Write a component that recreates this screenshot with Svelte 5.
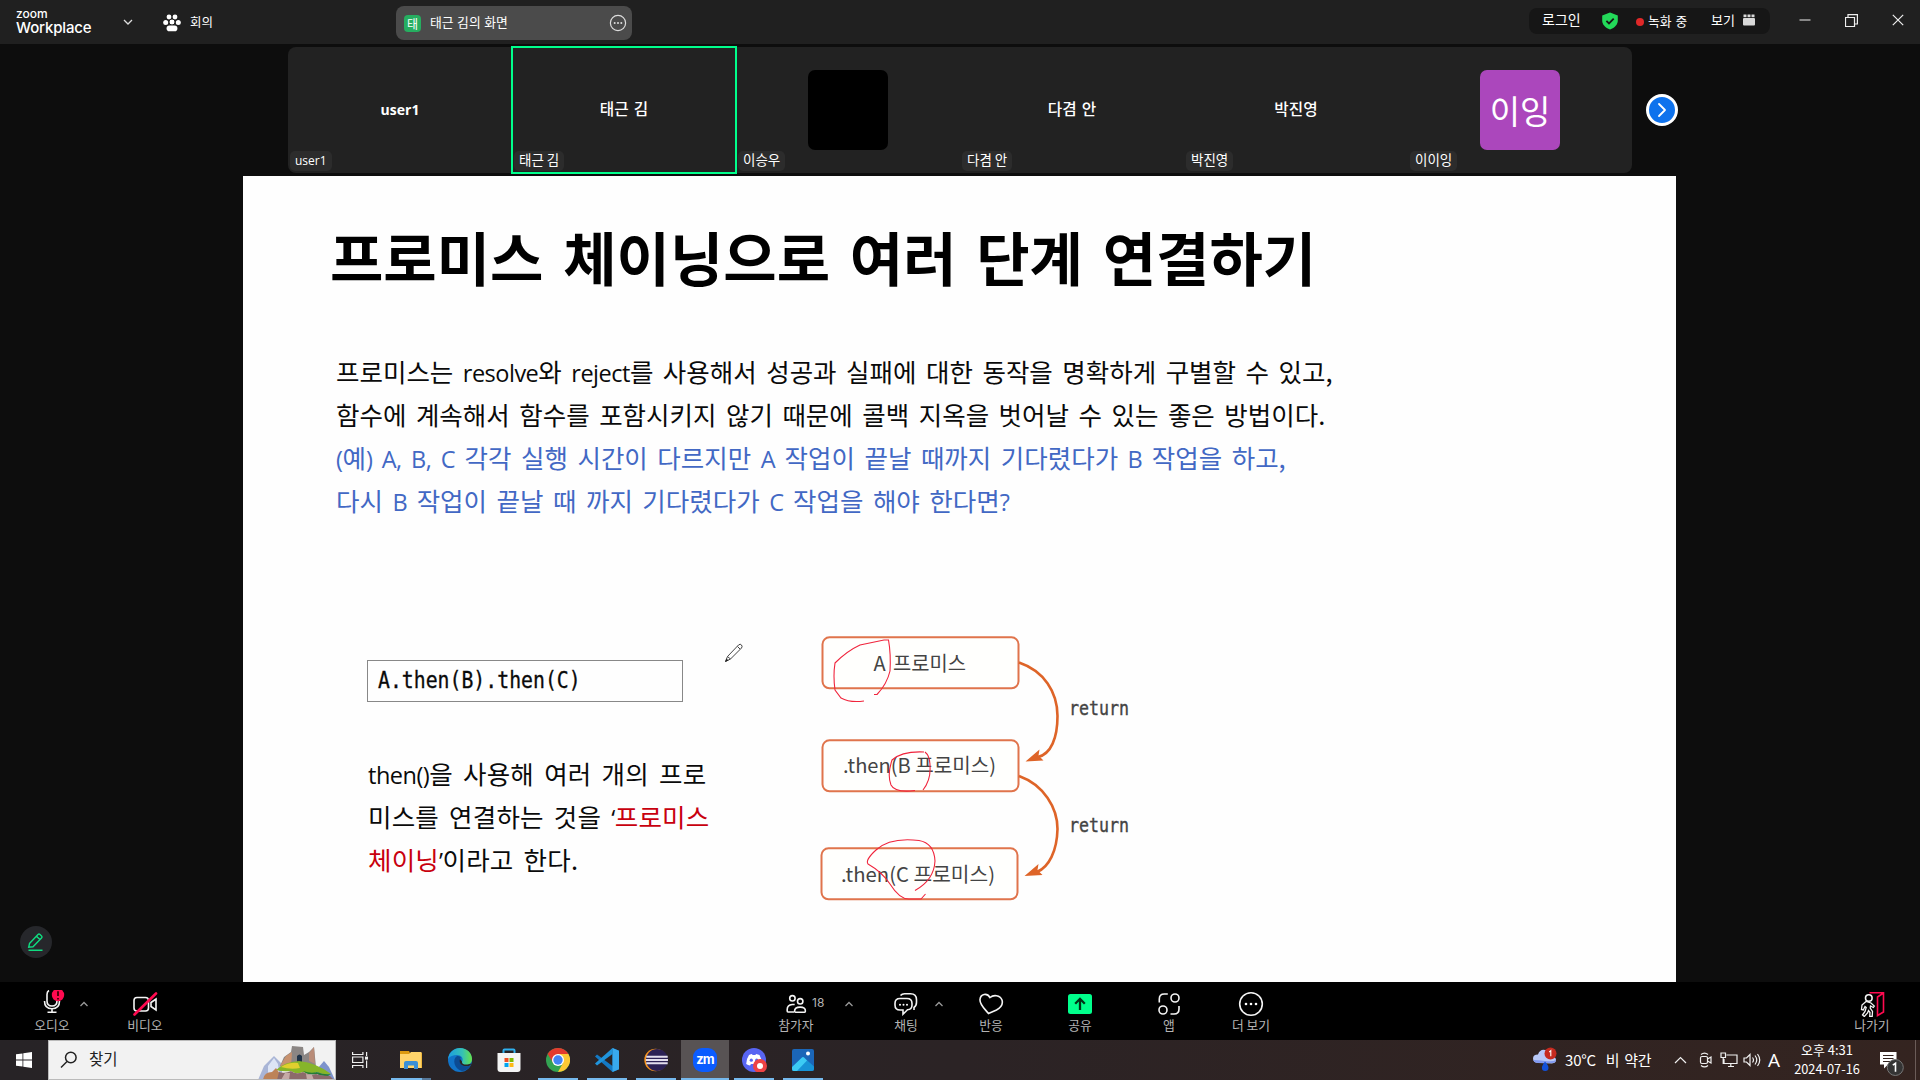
<script>
  const tiles = [
    { name: 'user1', label: 'user1', latin: true },
    { name: '태근 김', label: '태근 김', active: true },
    { label: '이승우', avatar: 'black', text: '' },
    { name: '다겸 안', label: '다겸 안' },
    { name: '박진영', label: '박진영' },
    { label: '이이잉', avatar: 'purple', text: '이잉' },
  ];
</script>

<div class="screen">
  <header class="topbar">
    <div class="brand"><span class="b1">zoom</span><span class="b2">Workplace</span></div>
    <svg class="brand-caret" width="10" height="6" viewBox="0 0 10 6"><path d="M1 1l4 4 4-4" /></svg>
    <svg class="paw" width="18" height="18" viewBox="0 0 18 18" fill="#fff">
      <circle cx="6" cy="3" r="2.4" /><circle cx="12" cy="3" r="2.4" /><circle cx="2.7" cy="8.6" r="2.5" /><circle cx="15.3" cy="8.6" r="2.5" />
      <circle cx="9" cy="8" r="3" stroke="#202020" /><rect x="3.6" y="11.6" width="10.8" height="5.6" rx="2.8" />
    </svg>
    <span class="meeting">회의</span>
    <div class="share-tab">
      <span class="share-badge">태</span>
      <span class="share-name">태근 김의 화면</span>
      <svg width="18" height="18" viewBox="0 0 18 18"><circle cx="9" cy="9" r="7.6" fill="none" stroke="#ddd" stroke-width="1.2" /><circle cx="5.7" cy="9" r="1" fill="#ddd" /><circle cx="9" cy="9" r="1" fill="#ddd" /><circle cx="12.3" cy="9" r="1" fill="#ddd" /></svg>
    </div>
    <div class="status">
      <span class="login">로그인</span>
      <svg class="shield" width="18" height="18" viewBox="0 0 18 18"><path d="M9 .6l7.8 3v5c0 4-3 7.200-7.800 9-4.800-1.800-7.800-5-7.800-9v-5z" fill="#23d959" /><path d="M5.400 8.800l2.600 2.600 4.700-4.700" fill="none" stroke="#161616" stroke-width="1.800" /></svg>
      <i class="rec-dot"></i>
      <span class="rec">녹화 중</span>
      <span class="view">보기</span>
      <svg class="grid" width="12" height="12" viewBox="0 0 12 12" fill="#d8d8d8"><rect x=".5" y=".5" width="3" height="2.700" /><rect x="4.500" y=".5" width="3" height="2.700" /><rect x="8.500" y=".5" width="3" height="2.700" /><rect x="0" y="4" width="12" height="7.500" rx="1" /></svg>
    </div>
    <div class="winctl">
      <svg width="12" height="12" viewBox="0 0 12 12"><path d="M.5 6h11" stroke="#aaa" stroke-width="1.500" /></svg>
      <svg width="13" height="13" viewBox="0 0 13 13"><path d="M.5 3.500h9v9h-9zM3 3.500V.600h9.400v9.400H9.500" /></svg>
      <svg width="12" height="12" viewBox="0 0 12 12"><path d="M.8.8l10.400 10.400M11.200.8L.8 11.200" /></svg>
    </div>
  </header>

  <section class="strip">
    <div class="tiles">
      {#each tiles as t}
        <div class="tile" class:active={t.active}>
          {#if t.avatar}
            <div class="avatar {t.avatar}">{t.text}</div>
          {:else}
            <span class="tname" class:latin={t.latin}>{t.name}</span>
          {/if}
          <span class="tlabel" class:latin={t.latin}>{t.label}</span>
        </div>
      {/each}
    </div>
    <div class="next"><svg width="14" height="18" viewBox="0 0 14 18"><path d="M4 3l6 6-6 6" fill="none" stroke="#fff" stroke-width="1.800" stroke-linecap="round" stroke-linejoin="round" /></svg></div>
  </section>

  <main class="stage">
    <aside class="side">
      <div class="annotate"><svg width="18" height="20" viewBox="0 0 18 20"><path d="M2.500 11.500L11 2.500q1-1 2 0l1.500 1.500q1 1 0 2L6 14.800l-4.300.5zM9.500 4.200l3.600 3.600M1.500 18.300h14" /></svg></div>
    </aside>
    <article class="slide">
      <h1>프로미스 체이닝으로 여러 단계 연결하기</h1>
      <div class="body">
        <p>프로미스는 <b>resolve</b>와 <b>reject</b>를 사용해서 성공과 실패에 대한 동작을 명확하게 구별할 수 있고,</p>
        <p>함수에 계속해서 함수를 포함시키지 않기 때문에 콜백 지옥을 벗어날 수 있는 좋은 방법이다.</p>
        <p class="blue"><b>(</b>예<b>) A, B, C</b> 각각 실행 시간이 다르지만 <b>A</b> 작업이 끝날 때까지 기다렸다가 <b>B</b> 작업을 하고,</p>
        <p class="blue">다시 <b>B</b> 작업이 끝날 때 까지 기다렸다가 <b>C</b> 작업을 해야 한다면<b>?</b></p>
      </div>
      <div class="lower">
        <div class="left">
          <div class="codebox"><code>A.then(B).then(C)</code></div>
          <div class="explain">
            <p><b>then()</b>을 사용해 여러 개의 프로</p>
            <p>미스를 연결하는 것을 <b>‘</b><em>프로미스</em></p>
            <p><em>체이닝</em><b>’</b>이라고 한다.</p>
          </div>
        </div>
        <svg class="cursor" width="20" height="20" viewBox="0 0 20 20"><path d="M1.500 18.500l2-5L14.500 2q1.800-1.600 3 0t0 3L6.500 16zM3.500 13.500l3 2.500M13.500 3.500l2.500 2.500" fill="#fff" stroke="#444" /><path d="M1 19l1.500-3.500 2 2z" fill="#222" /></svg>
        <svg class="diagram" width="330" height="280" viewBox="810 630 330 280">
          <g fill="#fffffd" stroke="#e0744c" stroke-width="2">
            <rect x="822.500" y="637.300" width="196" height="51" rx="7" />
            <rect x="822.500" y="740.300" width="196" height="51" rx="7" />
            <rect x="821.500" y="848.300" width="196" height="51" rx="7" />
          </g>
          <g fill="none" stroke="#de6428" stroke-width="2.600">
            <path d="M1019 662.500C1044 671 1057.500 692 1057.500 716C1057.500 738 1051 754 1038 757" />
            <path d="M1019 776C1044 785 1057.500 808 1057.500 829C1057 851 1049 867 1037 872" />
          </g>
          <path d="M1025.500 761.500l14-12-1 6 5 5z M1024.500 876l14-12-1 6 5 5z" fill="#de6428" />
          <g class="dtext" font-size="20">
            <text x="873.500" y="671" textLength="19">A</text>
            <text x="893" y="671" textLength="73" lengthAdjust="spacingAndGlyphs">프로미스</text>
            <text x="843" y="773" textLength="153" lengthAdjust="spacingAndGlyphs">.then(B 프로미스)</text>
            <text x="841" y="882" textLength="154" lengthAdjust="spacingAndGlyphs">.then(C 프로미스)</text>
          </g>
          <g class="mono" font-size="19.500">
            <text x="1069" y="715" textLength="60" lengthAdjust="spacingAndGlyphs">return</text>
            <text x="1069" y="832" textLength="60" lengthAdjust="spacingAndGlyphs">return</text>
          </g>
          <g class="ink">
            <path d="M864 701Q850 703 841 698L835 690Q833 676 835 663Q847 651 860 645L884 640L888.500 640Q891 654 890 671Q887 684 877 694.500L874 694.500" />
            <path d="M924 752Q902 751 892 760Q887 775 891 785Q895 793 915 790.500M923 790Q931 780 930 766Q930 756 925 752" />
            <path d="M915 890.500Q934 880 935 861Q934 843 919 840.500Q890 837 876 850Q865 860 868 864Q882 872 890 884Q900 900 910 899H921L925.500 894" />
          </g>
        </svg>
      </div>
    </article>
  </main>

  <nav class="toolbar">
    <div class="tool audio">
      <svg width="34" height="26" viewBox="35 990 34 26"><path d="M49 990.500q-2 1-2 4v6.500q0 5 5 5t5-5v-1M44.500 1001q0 7.700 7.500 7.700t7.500-7.700M52 1008.700v3.600M47.500 1012.300h9" /><circle cx="58" cy="995" r="6.200" fill="#ff0a50" stroke="none" /><path d="M58 991.200v4.800M58 998v1.600" stroke="#300" stroke-width="1.700" /></svg>
      <span>오디오</span>
    </div>
    <svg class="caret c1" width="14" height="8" viewBox="0 0 14 8"><path d="M3.500 6L7 2.500 10.500 6" /></svg>
    <div class="tool video">
      <svg width="26" height="26" viewBox="132 990 26 26"><rect x="134" y="997.500" width="14.500" height="13.500" rx="3" /><path d="M151 1002.500l5-3.500v11l-5-3.500z" /><path d="M134.500 1014.500l21.500-21" stroke="#ff0a50" stroke-width="2.600" stroke-linecap="round" /></svg>
      <span>비디오</span>
    </div>
    <div class="tool people">
      <svg width="26" height="26" viewBox="783 990 26 26"><circle cx="792.400" cy="998.300" r="2.700" /><circle cx="800.200" cy="1001.300" r="2.700" /><path d="M794 1012h-6q-.8 0-.8-1v-1.500q0-4.500 5-5h2.500" /><path d="M795.500 1012.300q-.9 0-.9-1.200 0-4 5.500-4t5.300 4q0 1.200-.8 1.200z" /></svg>
      <span>참가자</span><small>18</small>
    </div>
    <svg class="caret c2" width="14" height="8" viewBox="0 0 14 8"><path d="M3.500 6L7 2.500 10.500 6" /></svg>
    <div class="tool chat">
      <svg width="26" height="26" viewBox="893 990 26 26"><path d="M900 998.500h7q5 0 5 5v1.500q0 4.500-4.500 4.800l-4.500 4.400v-4.200h-3q-5 0-5-5v-1.500q0-5 5-5z" /><path d="M900.500 995.500q1.500-1.800 4-1.800h6q6 0 6 6v2.500q0 3.600-2.500 5.300v2.500" /><g fill="#fff" stroke="none"><circle cx="900" cy="1004.800" r="1" /><circle cx="903.500" cy="1004.800" r="1" /><circle cx="907" cy="1004.800" r="1" /></g></svg>
      <span>채팅</span>
    </div>
    <svg class="caret c3" width="14" height="8" viewBox="0 0 14 8"><path d="M3.500 6L7 2.500 10.500 6" /></svg>
    <div class="tool heart">
      <svg width="26" height="26" viewBox="978 990 26 26"><path d="M988.500 1013.500C984 1008 979.500 1004.500 980 999.500C980.500 994 987 992.500 990 997.500C993.500 994.500 1000 995 1002 1000C1003.500 1005 1000 1008 996.500 1010Z" /></svg>
      <span>반응</span>
    </div>
    <div class="tool share">
      <svg width="26" height="26" viewBox="1067 990 26 26"><rect x="1068" y="994" width="24" height="20" rx="2.500" fill="#00ff8c" stroke="none" /><path d="M1080 1010v-10.500M1075.200 1003.800l4.800-5 4.800 5" stroke="#003016" stroke-width="2.300" /></svg>
      <span>공유</span>
    </div>
    <div class="tool apps">
      <svg width="26" height="26" viewBox="1156 990 26 26"><circle cx="1175" cy="998" r="4" /><circle cx="1163" cy="1010" r="4" /><path d="M1159.300 1002.500v-3.500q0-5 5-5h3.500M1179 1006v3q0 5-5 5h-3.500" /></svg>
      <span>앱</span>
    </div>
    <div class="tool more">
      <svg width="26" height="26" viewBox="1238 991 26 26"><circle cx="1251" cy="1004" r="11.300" /><g fill="#fff" stroke="none"><circle cx="1246" cy="1004" r="1.300" /><circle cx="1251" cy="1004" r="1.300" /><circle cx="1256" cy="1004" r="1.300" /></g></svg>
      <span>더 보기</span>
    </div>
    <div class="tool exit">
      <svg width="26" height="26" viewBox="1859 991 26 26"><circle cx="1868.800" cy="998" r="3.300" /><path d="M1866 1001.500l-4 3.500-.5 4.500 1.800.5 1.700-3.500 1.200 1-1.200 4-2.500 3.500 1.800 1.500 3.200-3.500 1-2.500 1.500 2-.3 4h2.500l.3-5-2.300-3.500.3-2 2.800 1.500 1-1.500-3.300-3z" stroke-width="1.300" /><path d="M1869.500 992.700h14V1012l-6 3.500v-18.500l6-4" stroke="#ff0a50" stroke-width="1.600" /></svg>
      <span>나가기</span>
    </div>
  </nav>

  <footer class="taskbar">
    <div class="start"><svg width="16" height="16" viewBox="0 0 16 16" fill="#fff"><path d="M0 2.300l6.500-.9v6.100H0zM7.300 1.300L16 0v7.500H7.300zM0 8.400h6.500v6.200L0 13.700zM7.300 8.400H16V16l-8.700-1.200z" /></svg></div>
    <div class="search">
      <svg width="18" height="18" viewBox="0 0 18 18"><circle cx="10.800" cy="6.500" r="5.300" /><path d="M7 10.500L1 16.500" /></svg>
      <span>찾기</span>
      <svg class="castle" width="78" height="36" viewBox="258 1044 78 36">
        <path d="M258 1080l6-14 4-4 6-6 8 8v16z" fill="#a9b5d6" /><path d="M268 1066l6-8 4 6 2 16h-12z" fill="#dde5f5" />
        <path d="M318 1068l6-7 5 6 6 13h-17z" fill="#7d93cc" />
        <path d="M280 1066l4-9 7-5 1-6 11 1 1 8 5-3 5-5 2 20-16 4z" fill="#8b8684" /><path d="M280 1066l6-10 6-4-1 15z" fill="#c8926f" /><path d="M309 1053l5-6 1 17-6-3z" fill="#b98c78" />
        <path d="M297 1063v-7q2.500-3 5 0v7z" fill="#1f3348" />
        <path d="M276 1070q8-8 23-9 18 2 32 13-8 1-14-2-7 4-14 0-7 3-12-1-8 1-15-1z" fill="#86b529" /><path d="M281 1067q8-5 17-4l2 5q-9 2-19-1z" fill="#e0cf2e" /><path d="M303 1071q8 3 14 1 7 3 14 2l-3 2q-7 0-11-2-8 2-14-3z" fill="#247c38" />
        <path d="M263 1080q1-8 9-8l4-4 4 6-1 6z" fill="#bd8358" /><path d="M279 1072q6 2 12-1 5 4 12 1 7 4 13 2 6 2 14 2l4 4h-57z" fill="#8c6a6b" /><path d="M285 1073h5l-1 7h-8zM306 1074l6 1 2 5h-7z" fill="#c5aaa6" />
      </svg>
    </div>
    <div class="app tv"><svg width="16" height="16" viewBox="0 0 16 16" fill="none" stroke="#eee" stroke-width="1.200"><path d="M.6 0v2.500h10.300V0M.6 5h10.300v5.500H.6zM.6 16v-2.500h10.300V16M14.600 0v4M14.600 8.500V16" /><path d="M13 4.600h3v3h-3z" fill="#eee" stroke="none" /></svg></div>
    <div class="app run split"><svg width="24" height="24" viewBox="0 0 24 24"><path d="M1 3h9l1 2h12v15H1z" fill="#dc9a10" /><path d="M1 6h9l2-2h10.500v16H1z" fill="#ffd46b" /><path d="M5 21v-6q0-2 2-2h10q2 0 2 2v6h-4v-3.500H9V21z" fill="#3a8fd6" /></svg></div>
    <div class="app"><svg width="24" height="24" viewBox="0 0 24 24"><defs><linearGradient id="eg"><stop offset="0" stop-color="#1b9de2" /><stop offset=".6" stop-color="#35c1b5" /><stop offset="1" stop-color="#67e34a" /></linearGradient></defs><circle cx="12" cy="12" r="12" fill="#1173c8" /><path d="M0 11C1 4 6 0 12 0c7 0 12 5 12 11 0 4-3 6-6 6-3 0-5-1-4-3 2-4-1-7-5-7-4 0-7 1-9 4z" fill="url(#eg)" /><path d="M9 8c-5 3-3 13 5 15 4 0 7-3 9-6-4 3-12 1-11-5 0-2 1-2 1-2-1-2-3-2-4-2z" fill="#0c4b93" /><path d="M12 11c-2 6 5 9 11 6l-.5-1.500c-2 1.500-9 2-8.500-2z" fill="#2b2325" /></svg></div>
    <div class="app"><svg width="24" height="24" viewBox="0 0 24 24"><path d="M6.500 6V2.500q0-1 1-1h9q1 0 1 1V6" fill="none" stroke="#2fb0ee" stroke-width="2" /><path d="M.5 5h23v16q0 3-3 3h-17q-3 0-3-3z" fill="#f4f4f4" /><path d="M7.500 10h4v4h-4z" fill="#f04f23" /><path d="M12.500 10h4v4h-4z" fill="#7fba00" /><path d="M7.500 15h4v4h-4z" fill="#00a3ee" /><path d="M12.500 15h4v4h-4z" fill="#fdb813" /></svg></div>
    <div class="app run"><svg width="24" height="24" viewBox="0 0 24 24"><circle cx="12" cy="12" r="12" fill="#33a352" /><path d="M1.600 6l5.600 9L12 6h10.400a12 12 0 0 0-20.800 0z" fill="#e33b2e" /><path d="M12 6h10.400A12 12 0 0 1 12 24l5-9z" fill="#fcc934" /><circle cx="12" cy="12" r="6" fill="#fff" /><circle cx="12" cy="12" r="4.700" fill="#4285f4" /></svg></div>
    <div class="app run"><svg width="24" height="24" viewBox="0 0 24 24"><path d="M17.500 0L24 2.800v18.400L17.500 24 0 8.500l2-2L17.500 18z" fill="#1479c4" /><path d="M17.500 0v6L2 17.500l-2-2z" fill="#2094dc" /><path d="M17.500 0L24 2.800v18.400L17.500 24z" fill="#38a9ee" /></svg></div>
    <div class="app run"><svg width="24" height="24" viewBox="0 0 24 24"><circle cx="11.500" cy="12" r="11.200" fill="#f7941e" /><circle cx="13" cy="12" r="11" fill="#2c2255" /><path d="M2.300 8.800h21.400M1.800 12h22.400M2.300 15.200h21.400" stroke="#e3e0ee" stroke-width="1.900" /></svg></div>
    <div class="app run current"><span class="zm">zm</span></div>
    <div class="app run"><svg width="25" height="24" viewBox="0 0 25 24"><circle cx="12" cy="12" r="12" fill="#5865f2" /><path d="M7 7q2-1 3-1l.5 1h3L14 6q2 .3 3.500 1Q20 11.500 20 16q-2 1.600-4 1.600L15 16H9l-1 1.600Q6 17.400 4.200 16 4.200 11 7 7z" fill="#fff" /><circle cx="9.300" cy="12.200" r="1.600" fill="#5865f2" /><circle cx="14.700" cy="12.200" r="1.600" fill="#5865f2" /><circle cx="18" cy="18" r="7" fill="#ed4245" /><circle cx="18" cy="18" r="3" fill="#fff" /></svg></div>
    <div class="app run"><svg width="22" height="22" viewBox="0 0 22 22"><rect width="22" height="22" rx="2" fill="#1b66b8" /><path d="M0 19L10 8.500q1-1 2 0l10 9V20q0 2-2 2H2q-2 0-2-2z" fill="#1793d6" /><path d="M0 18L10 8.500q1-1 2 0l3 3L5 22H2q-2 0-2-2z" fill="#3ccbf4" /><circle cx="16" cy="4.500" r="2" fill="#fff" /></svg></div>
    <div class="tray">
      <svg class="weather" width="26" height="26" viewBox="0 0 26 26"><path d="M6 16q-5-.5-5-4.500T6 7.500Q8 2 13 3t7 6q4 1 4 4t-4 3.500z" fill="#b9c9f8" /><path d="M1.300 13q1 3 4.700 3h14q4-.5 4-3-3 2-11 1T1.300 13z" fill="#8098ef" /><path d="M13 14.500q3.500 4 3.500 6.200a3.300 3.300 0 0 1-6.600 0q0-2 3.100-6.200z" fill="#1250d8" /><circle cx="18.500" cy="6.500" r="6" fill="#c62b20" /><path d="M17.200 5l1.600-1.300v5.600" fill="none" stroke="#fff" stroke-width="1.100" /></svg>
      <span class="temp">30°C&nbsp; 비 약간</span>
      <svg class="chev" width="13" height="8" viewBox="0 0 13 8"><path d="M1 7l5.500-5.500L12 7" /></svg>
      <svg class="cam" width="14" height="16" viewBox="0 0 14 16"><rect x="1.500" y="4.500" width="7" height="7" rx="1.500" /><path d="M8.500 7l3.500-2v6l-3.500-2M2 2.500Q5.500-.3 9 2.500M2 13.500q3.500 2.800 7 0" /></svg>
      <svg class="mon" width="18" height="16" viewBox="0 0 18 16"><path d="M6.500 3h10.500v8.500H4V7M8 14.500h6M10.800 11.500v3M1 1h4.500v4.500H1zM3.200 5.500V12" /></svg>
      <svg class="spk" width="18" height="14" viewBox="0 0 18 14"><path d="M1 5h2.500L7 1.500v11L3.500 9H1zM9.500 4.500q2 2.500 0 5M12 2.500q3.500 4.500 0 9M14.500 1q4.500 6 0 12" /></svg>
      <span class="ime">A</span>
      <div class="clock"><span>오후 4:31</span><span class="date">2024-07-16</span></div>
      <svg class="noti" width="26" height="26" viewBox="1877 1050 26 26"><path d="M1879 1052h16.500v12.500H1887l-4 4v-4h-4z" fill="#fff" /><path d="M1882 1055.500h10.500M1882 1058.500h10.500M1882 1061.500h7" stroke="#33231f" stroke-width="1.100" /><circle cx="1894.300" cy="1067.500" r="8" fill="#343434" stroke="#777" /><path d="M1891.800 1065.200l2.700-1.900v8.500" fill="none" stroke="#fff" stroke-width="1.600" /></svg>
    </div>
    <i class="peek"></i>
  </footer>
</div>

<style>
  :global(body) { background: #0d0d0d; overflow: hidden; }
  .screen { width: 1920px; height: 1080px; display: flex; flex-direction: column; background: #0d0d0d; color: #fff; font-family: 'Noto Sans CJK KR', sans-serif; font-size: 12px; line-height: 1; overflow: hidden; }
  .screen :is(svg, i, span) { flex: none; }
  span { white-space: nowrap; }
  p, h1 { margin: 0; white-space: nowrap; }

  .topbar { height: 44px; background: #202020; display: flex; align-items: center; flex: none; }
  .brand { width: 76px; margin-left: 16px; display: flex; flex-direction: column; font-family: Inter, sans-serif; margin-top: -1px; }
  .b1 { font-size: 12px; line-height: 11px; font-weight: 500; }
  .b2 { font-size: 15px; line-height: 17px; font-weight: 500; letter-spacing: -0.15px; }
  .brand-caret { margin-left: 31px; fill: none; stroke: #ddd; stroke-width: 1.3; }
  .paw { margin-left: 30px; margin-top: 1px; }
  .meeting { margin-left: 9px; width: 24px; font-size: 12.5px; margin-top: 1px; }
  .share-tab { width: 236px; height: 34px; margin-left: 182px; margin-top: 2px; box-sizing: border-box; border-radius: 8px; background: #4b4b4b; display: flex; align-items: center; padding: 0 5px 0 8px; }
  .share-badge { width: 17px; height: 17px; border-radius: 4px; background: #26ae60; display: grid; place-items: center; font-size: 12px; line-height: 17px; }
  .share-name { margin-left: 9px; margin-top: -1px; font-size: 12.8px; word-spacing: 0.7px; flex: 1 !important; }
  .status { width: 241px; height: 26px; margin-left: 897px; margin-top: -2px; border-radius: 8px; background: #161616; display: flex; align-items: center; box-sizing: border-box; padding-left: 13px; }
  .login { width: 45px; font-size: 14px; margin-top: -5px; }
  .shield { margin-left: 14px; }
  .rec-dot { width: 8px; height: 8px; margin-left: 17px; margin-top: 2px; border-radius: 50%; background: #e02828; }
  .rec { width: 40px; margin-left: 4px; font-size: 12.8px; word-spacing: 1px; margin-top: 0; }
  .view { width: 24px; margin-left: 23px; font-size: 13px; margin-top: -4px; }
  .grid { margin-left: 8px; margin-top: -2px; }
  .winctl { display: flex; align-items: center; gap: 34px; margin-left: 29px; margin-top: -4px; }
  .winctl svg { fill: none; stroke: #eee; stroke-width: 1.2; }

  .strip { height: 132px; flex: none; display: flex; align-items: center; padding-left: 288px; }
  .tiles { display: grid; grid-template-columns: repeat(6, 224px); height: 126px; background: #222; border-radius: 8px; }
  .tile { position: relative; display: grid; place-items: center; }
  .tile.active { outline: 2px solid #00ff8c; outline-offset: -1px; }
  .tname { font-size: 15.7px; font-weight: 500; word-spacing: 1.5px; margin-top: -3px; }
  .tname.latin { font-family: 'Open Sans', sans-serif; font-size: 14px; font-weight: 700; margin-top: -1px; }
  .tlabel { position: absolute; left: 2px; bottom: 2px; height: 20px; padding: 0 5px; line-height: 17px; border-radius: 5px; background: #2c2c2c; font-size: 13.5px; box-sizing: border-box; }
  .tlabel.latin { font-family: 'Open Sans', sans-serif; font-size: 12px; line-height: 20px; }
  .avatar { width: 80px; height: 80px; border-radius: 7px; display: grid; place-items: center; font-size: 33px; line-height: 78px; }
  .black { background: #000; }
  .purple { background: #ab47bc; }
  .next { width: 26px; height: 26px; border: 3px solid #fff; border-radius: 50%; background: #0e72ed; margin-left: 14px; display: grid; place-items: center; }

  .stage { height: 806px; flex: none; display: flex; }
  .side { width: 243px; flex: none; display: flex; align-items: flex-end; }
  .annotate { width: 32px; height: 32px; margin: 0 0 24px 20px; border-radius: 50%; background: #26272b; display: grid; place-items: center; }
  .annotate svg { fill: none; stroke: #10dc80; stroke-width: 1.4; }
  .slide { width: 1433px; background: #fefefe; color: #0a0a0a; flex: none; overflow: hidden; }
  h1 { margin: 46px 0 0 87px; font-size: 58px; line-height: 68px; font-weight: 700; word-spacing: 6.6px; color: #000; }
  .body { margin: 59px 0 0 93px; }
  .body p, .explain p { font-size: 25.5px; line-height: 43px; word-spacing: 3.8px; }
  b { font-family: 'Open Sans', sans-serif; font-weight: 400; font-size: 23.5px; letter-spacing: -0.5px; line-height: 1; }
  .blue { color: #4268c4; }
  .lower { display: flex; }
  .left { width: 360px; margin: 139px 0 0 124px; flex: none; }
  .codebox { width: 316px; height: 42px; box-sizing: border-box; border: 1px solid #888; display: flex; align-items: center; padding: 0 0 2px 10px; }
  code { font-family: 'DejaVu Sans Mono', monospace; font-size: 22.5px; transform: scaleX(0.88); transform-origin: left; white-space: nowrap; -webkit-text-stroke: 0.3px #0a0a0a; }
  .explain { margin: 49px 0 0 1px; }
  .explain p { letter-spacing: 0.2px; word-spacing: 4.2px; }
  em { font-style: normal; color: #c8000e; }
  .cursor { margin: 122px 0 0 -3px; }
  .diagram { margin: 109px 0 0 66px; }
  .dtext { fill: #444; font-family: 'Noto Sans CJK KR', sans-serif; }
  .mono { fill: #444; stroke: #444; stroke-width: 0.4; font-family: 'DejaVu Sans Mono', monospace; }
  .ink { fill: none; stroke: #f0243c; stroke-width: 1.1; }

  .toolbar { height: 58px; flex: none; background: #000; display: flex; }
  .toolbar svg { fill: none; stroke: #f4f4f4; stroke-width: 1.6; }
  .tool { width: 50px; flex: none; display: flex; flex-direction: column; align-items: center; padding-top: 9px; position: relative; }
  .tool span { font-size: 12.8px; line-height: 16px; color: #b4b4b4; margin-top: 0; }
  .tool small { position: absolute; left: 41px; top: 14px; font-family: Inter, sans-serif; font-size: 12px; line-height: 13px; color: #b4b4b4; }
  .toolbar .caret { margin-top: 18px; stroke: #999; stroke-width: 1.3; }
  .audio { margin-left: 27px; }
  .video { margin-left: 29px; }
  .people { margin-left: 601px; }
  .c2 { margin-left: 21px; }
  .chat { margin-left: 25px; }
  .c3 { margin-left: 1px; }
  .heart { margin-left: 20px; }
  .share { margin-left: 39px; }
  .apps { margin-left: 39px; }
  .more { margin-left: 32px; }
  .exit { margin-left: 571px; }
  .audio, .video, .people, .chat, .heart, .share, .apps { padding-top: 8px; }
  .audio span, .video span, .people span, .chat span, .heart span, .share span, .apps span { margin-top: 1px; }

  .taskbar { height: 40px; flex: none; display: flex; background: linear-gradient(90deg, #272326, #2b2325 50%, #342420); }
  .start { width: 48px; display: grid; place-items: center; }
  .search { width: 288px; height: 40px; box-sizing: border-box; border: 1px solid #bbb; background: #f2f2f2; color: #222; display: flex; align-items: center; padding-left: 11px; font-size: 15.5px; overflow: hidden; }
  .search > svg:first-child { fill: none; stroke: #222; stroke-width: 1.5; }
  .search span { margin-left: 11px; margin-top: -2px; width: 28px; }
  .castle { margin-left: 141px; margin-top: 4px; }
  .app { width: 48px; margin-right: 1px; flex: none; display: grid; place-items: center; position: relative; }
  .app.tv { margin-right: 3px; }
  .run::after { content: ''; position: absolute; left: 4px; right: 4px; bottom: 0; height: 2px; background: #76b9ed; }
  .run.split::after { background: linear-gradient(90deg, #76b9ed 31px, #56789a 31px); }
  .current { background: #585354; }
  .current::after { left: 0; right: 0; }
  .zm { width: 24px; height: 24px; border-radius: 9px; background: #0b5cff; font: 700 13px/22px Inter, sans-serif; text-align: center; letter-spacing: -0.8px; }
  .tray { margin-left: auto; display: flex; align-items: center; width: 383px; }
  .tray svg:not(.weather):not(.noti) { fill: none; stroke: #f0f0f0; stroke-width: 1.2; }
  .temp { margin-left: 7px; width: 86px; font-size: 15px; letter-spacing: -0.2px; word-spacing: 1.7px; margin-top: -2px; }
  .chev { margin-left: 23px; }
  .cam { margin-left: 12px; }
  .mon { margin-left: 7px; }
  .spk { margin-left: 5px; }
  .ime { margin-left: 7px; width: 15px; font: 19px/20px 'Open Sans', sans-serif; }
  .clock { width: 70px; margin-left: 9px; display: flex; flex-direction: column; align-items: center; font-size: 13px; line-height: 19px; margin-top: -3px; }
  .date { font-size: 12.8px; }
  .noti { margin-left: 16px; margin-top: 6px; }
  .peek { width: 1px; margin-right: 4px; background: #6b5c58; }
</style>
